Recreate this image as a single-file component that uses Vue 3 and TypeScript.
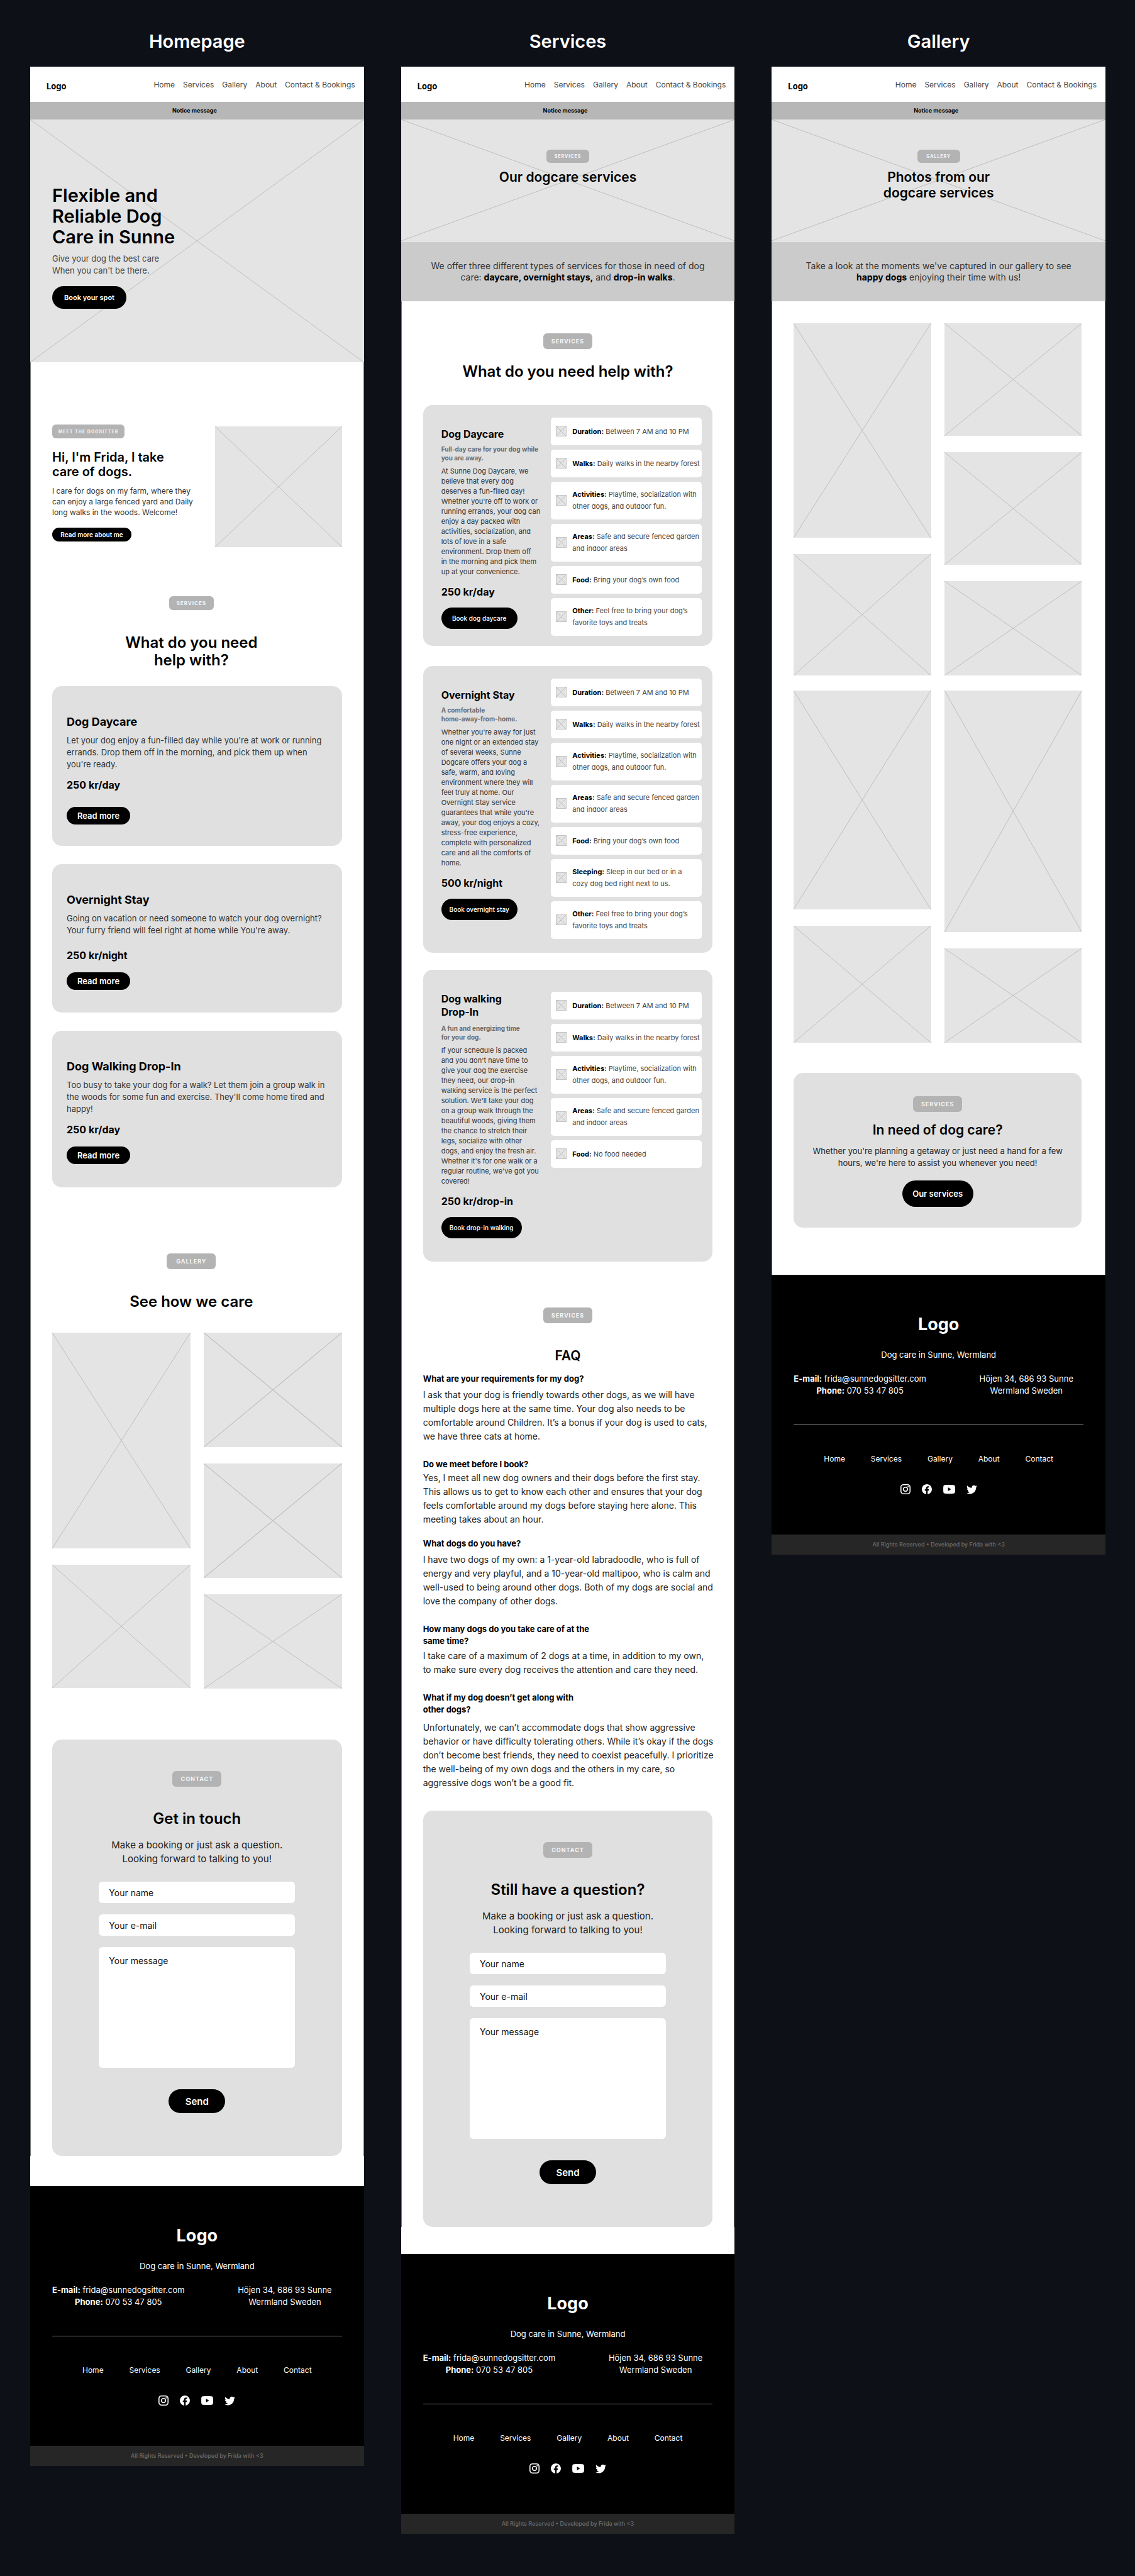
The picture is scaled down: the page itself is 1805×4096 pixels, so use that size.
<script setup lang="ts">
import { h } from 'vue'
import type { VNode } from 'vue'

type PageId = 'home' | 'services' | 'gallery'

interface Part {
  text: string
  strong?: boolean
}

interface Page {
  id: PageId
  title: string
}

interface Teaser {
  name: string
  text: string
  price: string
  kind: string
}

interface Feature {
  label: string
  text: string
}

interface Service {
  kind: string
  name: string
  lead: string
  text: string
  price: string
  action: string
  features: Feature[]
}

interface Faq {
  kind: string
  question: string
  answer: string
}

// Wireframe picture placeholder: a grey box crossed corner to corner.
const CrossBox = () =>
  h('svg', { viewBox: '0 0 100 100', preserveAspectRatio: 'none', 'aria-hidden': 'true' }, [
    h('path', {
      d: 'M0 0L100 100M100 0L0 100',
      fill: 'none',
      stroke: '#bdbdbd',
      'stroke-width': 1,
      'vector-effect': 'non-scaling-stroke',
    }),
  ])

// Copy with its line breaks kept.
const Lines = (props: { text: string }) =>
  props.text
    .split('\n')
    .flatMap((line, index): (VNode | string)[] => (index ? [h('br'), line] : [line]))
Lines.props = ['text']

const pages: Page[] = [
  { id: 'home', title: 'Homepage' },
  { id: 'services', title: 'Services' },
  { id: 'gallery', title: 'Gallery' },
]

const navLinks = ['Home', 'Services', 'Gallery', 'About', 'Contact & Bookings']
const footerLinks = ['Home', 'Services', 'Gallery', 'About', 'Contact']

const intro: Record<'services' | 'gallery', Part[]> = {
  services: [
    { text: 'We offer three different types of services for those in need of dog\ncare: ' },
    { text: 'daycare, overnight stays,', strong: true },
    { text: ' and ' },
    { text: 'drop-in walks', strong: true },
    { text: '.' },
  ],
  gallery: [
    { text: "Take a look at the moments we've captured in our gallery to see\n" },
    { text: 'happy dogs', strong: true },
    { text: ' enjoying their time with us!' },
  ],
}

const teasers: Teaser[] = [
  {
    kind: 'daycare',
    name: 'Dog Daycare',
    text: "Let your dog enjoy a fun-filled day while you're at work or running\nerrands. Drop them off in the morning, and pick them up when\nyou're ready.",
    price: '250 kr/day',
  },
  {
    kind: 'overnight',
    name: 'Overnight Stay',
    text: "Going on vacation or need someone to watch your dog overnight?\nYour furry friend will feel right at home while You're away.",
    price: '250 kr/night',
  },
  {
    kind: 'walking',
    name: 'Dog Walking Drop-In',
    text: "Too busy to take your dog for a walk? Let them join a group walk in\nthe woods for some fun and exercise. They'll come home tired and\nhappy!",
    price: '250 kr/day',
  },
]

const duration: Feature = { label: 'Duration:', text: 'Between 7 AM and 10 PM' }
const walks: Feature = { label: 'Walks:', text: 'Daily walks in the nearby forest' }
const activities: Feature = { label: 'Activities:', text: 'Playtime, socialization with\nother dogs, and outdoor fun.' }
const areas: Feature = { label: 'Areas:', text: 'Safe and secure fenced garden\nand indoor areas' }
const ownFood: Feature = { label: 'Food:', text: 'Bring your dog’s own food' }
const sleeping: Feature = { label: 'Sleeping:', text: 'Sleep in our bed or in a\ncozy dog bed right next to us.' }
const other: Feature = { label: 'Other:', text: 'Feel free to bring your dog’s\nfavorite toys and treats' }

const services: Service[] = [
  {
    kind: 'daycare',
    name: 'Dog Daycare',
    lead: 'Full-day care for your dog while\nyou are away.',
    text: "At Sunne Dog Daycare, we\nbelieve that every dog\ndeserves a fun-filled day!\nWhether you're off to work or\nrunning errands, your dog can\nenjoy a day packed with\nactivities, socialization, and\nlots of love in a safe\nenvironment. Drop them off\nin the morning and pick them\nup at your convenience.",
    price: '250 kr/day',
    action: 'Book dog daycare',
    features: [duration, walks, activities, areas, ownFood, other],
  },
  {
    kind: 'overnight',
    name: 'Overnight Stay',
    lead: 'A comfortable\nhome-away-from-home.',
    text: "Whether you're away for just\none night or an extended stay\nof several weeks, Sunne\nDogcare offers your dog a\nsafe, warm, and loving\nenvironment where they will\nfeel truly at home. Our\nOvernight Stay service\nguarantees that while you're\naway, your dog enjoys a cozy,\nstress-free experience,\ncomplete with personalized\ncare and all the comforts of\nhome.",
    price: '500 kr/night',
    action: 'Book overnight stay',
    features: [duration, walks, activities, areas, ownFood, sleeping, other],
  },
  {
    kind: 'walking',
    name: 'Dog walking\nDrop-In',
    lead: 'A fun and energizing time\nfor your dog.',
    text: "If your schedule is packed\nand you don't have time to\ngive your dog the exercise\nthey need, our drop-in\nwalking service is the perfect\nsolution. We'll take your dog\non a group walk through the\nbeautiful woods, giving them\nthe chance to stretch their\nlegs, socialize with other\ndogs, and enjoy the fresh air.\nWhether it's for one walk or a\nregular routine, we've got you\ncovered!",
    price: '250 kr/drop-in',
    action: 'Book drop-in walking',
    features: [duration, walks, activities, areas, { label: 'Food:', text: 'No food needed' }],
  },
]

const faqs: Faq[] = [
  {
    kind: 'requirements',
    question: 'What are your requirements for my dog?',
    answer:
      'I ask that your dog is friendly towards other dogs, as we will have\nmultiple dogs here at the same time. Your dog also needs to be\ncomfortable around Children. It’s a bonus if your dog is used to cats,\nwe have three cats at home.',
  },
  {
    kind: 'meet',
    question: 'Do we meet before I book?',
    answer:
      'Yes, I meet all new dog owners and their dogs before the first stay.\nThis allows us to get to know each other and ensures that your dog\nfeels comfortable around my dogs before staying here alone. This\nmeeting takes about an hour.',
  },
  {
    kind: 'own',
    question: 'What dogs do you have?',
    answer:
      'I have two dogs of my own: a 1-year-old labradoodle, who is full of\nenergy and very playful, and a 10-year-old maltipoo, who is calm and\nwell-used to being around other dogs. Both of my dogs are social and\nlove the company of other dogs.',
  },
  {
    kind: 'amount',
    question: 'How many dogs do you take care of at the\nsame time?',
    answer:
      'I take care of a maximum of 2 dogs at a time, in addition to my own,\nto make sure every dog receives the attention and care they need.',
  },
  {
    kind: 'conflict',
    question: 'What if my dog doesn’t get along with\nother dogs?',
    answer:
      'Unfortunately, we can’t accommodate dogs that show aggressive\nbehavior or have difficulty tolerating others. While it’s okay if the dogs\ndon’t become best friends, they need to coexist peacefully. I prioritize\nthe well-being of my own dogs and the others in my care, so\naggressive dogs won’t be a good fit.',
  },
]
</script>

<template>
  <main class="board">
    <article v-for="page in pages" :key="page.id" class="column">
      <h1 class="board-title">{{ page.title }}</h1>

      <div class="frame" :class="`frame-${page.id}`">
        <header class="top">
          <a class="top-logo" href="#">Logo</a>
          <nav class="top-nav">
            <a v-for="link in navLinks" :key="link" href="#">{{ link }}</a>
          </nav>
        </header>
        <p class="notice">Notice message</p>

        <template v-if="page.id === 'home'">
          <section class="hero hero-home">
            <CrossBox class="hero-art" />
            <div class="hero-copy">
              <h2>Flexible and<br />Reliable Dog<br />Care in Sunne</h2>
              <p>Give your dog the best care<br />When you can't be there.</p>
              <button type="button" class="pill pill-hero">Book your spot</button>
            </div>
          </section>

          <div class="body">
            <section class="about">
              <div class="about-copy">
                <span class="badge badge-meet">MEET THE DOGSITTER</span>
                <h2>Hi, I'm Frida, I take<br />care of dogs.</h2>
                <p>I care for dogs on my farm, where they<br />can enjoy a large fenced yard and Daily<br />long walks in the woods. Welcome!</p>
                <button type="button" class="pill pill-about">Read more about me</button>
              </div>
              <CrossBox class="picture about-picture" />
            </section>

            <section class="teasers">
              <div class="heading heading-left">
                <span class="badge badge-medium">SERVICES</span>
                <h2>What do you need<br />help with?</h2>
              </div>
              <article v-for="item in teasers" :key="item.kind" class="teaser" :class="`teaser-${item.kind}`">
                <h3>{{ item.name }}</h3>
                <p><Lines :text="item.text" /></p>
                <strong class="price">{{ item.price }}</strong>
                <button type="button" class="pill pill-more">Read more</button>
              </article>
            </section>

            <section class="preview">
              <div class="heading heading-left">
                <span class="badge badge-large">GALLERY</span>
                <h2>See how we care</h2>
              </div>
              <div class="photos">
                <div class="photo-column">
                  <CrossBox class="picture h343" />
                  <CrossBox class="picture h196" />
                </div>
                <div class="photo-column">
                  <CrossBox class="picture h182" />
                  <CrossBox class="picture h182" />
                  <CrossBox class="picture h150" />
                </div>
              </div>
            </section>
          </div>
        </template>

        <template v-else-if="page.id === 'services'">
          <section class="hero hero-sub">
            <CrossBox class="hero-art" />
            <span class="badge badge-small">SERVICES</span>
            <h2>Our dogcare services</h2>
          </section>
          <p class="intro">
            <component :is="part.strong ? 'strong' : 'span'" v-for="part in intro.services" :key="part.text"><Lines :text="part.text" /></component>
          </p>

          <div class="body">
            <div class="heading heading-services">
              <span class="badge badge-large">SERVICES</span>
              <h2>What do you need help with?</h2>
            </div>

            <article v-for="item in services" :key="item.kind" class="service" :class="`service-${item.kind}`">
              <div class="service-copy">
                <h3><Lines :text="item.name" /></h3>
                <p class="service-lead"><Lines :text="item.lead" /></p>
                <p class="service-text"><Lines :text="item.text" /></p>
                <strong class="price">{{ item.price }}</strong>
                <button type="button" class="pill pill-book">{{ item.action }}</button>
              </div>
              <ul class="features">
                <li v-for="feature in item.features" :key="feature.label">
                  <CrossBox class="feature-icon" />
                  <p><strong>{{ feature.label }}</strong>&#32;<Lines :text="feature.text" /></p>
                </li>
              </ul>
            </article>

            <section class="faq">
              <div class="heading heading-faq">
                <span class="badge badge-large">SERVICES</span>
                <h2>FAQ</h2>
              </div>
              <div v-for="item in faqs" :key="item.kind" class="faq-item" :class="`faq-${item.kind}`">
                <h3><Lines :text="item.question" /></h3>
                <p><Lines :text="item.answer" /></p>
              </div>
            </section>
          </div>
        </template>

        <template v-else>
          <section class="hero hero-sub">
            <CrossBox class="hero-art" />
            <span class="badge badge-small">GALLERY</span>
            <h2>Photos from our<br />dogcare services</h2>
          </section>
          <p class="intro">
            <component :is="part.strong ? 'strong' : 'span'" v-for="part in intro.gallery" :key="part.text"><Lines :text="part.text" /></component>
          </p>

          <div class="body body-gallery">
            <div class="photos">
              <div class="photo-column">
                <CrossBox class="picture h341" />
                <CrossBox class="picture h193" />
              </div>
              <div class="photo-column">
                <CrossBox class="picture h179" />
                <CrossBox class="picture h179" />
                <CrossBox class="picture h150" />
              </div>
            </div>
            <div class="photos">
              <div class="photo-column">
                <CrossBox class="picture h348" />
                <CrossBox class="picture h186" />
              </div>
              <div class="photo-column">
                <CrossBox class="picture h384" />
                <CrossBox class="picture h150" />
              </div>
            </div>
            <section class="cta">
              <span class="badge badge-large">SERVICES</span>
              <h2>In need of dog care?</h2>
              <p>Whether you're planning a getaway or just need a hand for a few<br />hours, we're here to assist you whenever you need!</p>
              <button type="button" class="pill pill-cta">Our services</button>
            </section>
          </div>
        </template>

        <div v-if="page.id !== 'gallery'" class="body">
          <form class="contact" @submit.prevent>
            <span class="badge badge-large">CONTACT</span>
            <h2>{{ page.id === 'home' ? 'Get in touch' : 'Still have a question?' }}</h2>
            <p>Make a booking or just ask a question.<br />Looking forward to talking to you!</p>
            <input type="text" placeholder="Your name" aria-label="Your name" />
            <input type="email" placeholder="Your e-mail" aria-label="Your e-mail" />
            <textarea placeholder="Your message" aria-label="Your message"></textarea>
            <button type="submit" class="pill pill-send">Send</button>
          </form>
        </div>

        <footer class="footer">
          <div class="footer-logo">Logo</div>
          <p class="tagline">Dog care in Sunne, Wermland</p>
          <div class="footer-info">
            <p><strong>E-mail:</strong> frida@sunnedogsitter.com<br /><strong>Phone:</strong> 070 53 47 805</p>
            <p class="address">Höjen 34, 686 93 Sunne<br />Wermland Sweden</p>
          </div>
          <hr />
          <nav class="footer-nav">
            <a v-for="link in footerLinks" :key="link" href="#">{{ link }}</a>
          </nav>
          <div class="social">
            <a href="#" aria-label="Instagram">
              <svg width="16" height="16" viewBox="2 2 20 20" fill="currentColor">
                <path d="M7.8,2H16.2C19.4,2 22,4.6 22,7.8V16.2A5.8,5.8 0 0,1 16.2,22H7.8C4.6,22 2,19.4 2,16.2V7.8A5.8,5.8 0 0,1 7.8,2M7.6,4A3.6,3.6 0 0,0 4,7.6V16.4C4,18.39 5.61,20 7.6,20H16.4A3.6,3.6 0 0,0 20,16.4V7.6C20,5.61 18.39,4 16.4,4H7.6M17.25,5.5A1.25,1.25 0 0,1 18.5,6.75A1.25,1.25 0 0,1 17.25,8A1.25,1.25 0 0,1 16,6.75A1.25,1.25 0 0,1 17.25,5.5M12,7A5,5 0 0,1 17,12A5,5 0 0,1 12,17A5,5 0 0,1 7,12A5,5 0 0,1 12,7M12,9A3,3 0 0,0 9,12A3,3 0 0,0 12,15A3,3 0 0,0 15,12A3,3 0 0,0 12,9Z" />
              </svg>
            </a>
            <a href="#" aria-label="Facebook">
              <svg width="16" height="16" viewBox="2 2 20 20" fill="currentColor">
                <path d="M12 2.04C6.5 2.04 2 6.53 2 12.06C2 17.06 5.66 21.21 10.44 21.96V14.96H7.9V12.06H10.44V9.85C10.44 7.34 11.93 5.96 14.22 5.96C15.31 5.96 16.45 6.15 16.45 6.15V8.62H15.19C13.95 8.62 13.56 9.39 13.56 10.16V12.06H16.34L15.89 14.96H13.56V21.96A10 10 0 0 0 22 12.06C22 6.53 17.5 2.04 12 2.04Z" />
              </svg>
            </a>
            <a href="#" aria-label="YouTube">
              <svg width="19" height="14" viewBox="0 0 20 14.7" fill="currentColor" fill-rule="evenodd">
                <path d="M3 .3C7 0 13 0 17 .3C19 .5 19.6 1.5 19.8 3.2C20 6 20 9 19.8 11.500C19.600 13.200 19 14.200 17 14.400C13 14.700 7 14.700 3 14.400C1 14.200 .4 13.200 .2 11.500C0 9 0 6 .2 3.200C.4 1.500 1 .5 3 .3ZM8 4.300V10.400L13.200 7.350Z" />
              </svg>
            </a>
            <a href="#" aria-label="Twitter">
              <svg width="17" height="15" viewBox="1.500 3.700 21 17.500" fill="currentColor">
                <path d="M22.46,6C21.69,6.35 20.86,6.58 20,6.69C20.88,6.16 21.56,5.32 21.88,4.31C21.05,4.81 20.13,5.16 19.16,5.36C18.37,4.5 17.26,4 16,4C13.65,4 11.73,5.92 11.73,8.29C11.73,8.63 11.77,8.96 11.84,9.27C8.28,9.09 5.11,7.38 3,4.79C2.63,5.42 2.42,6.16 2.42,6.94C2.42,8.43 3.17,9.75 4.33,10.5C3.62,10.5 2.96,10.3 2.38,10C2.38,10 2.38,10 2.38,10.03C2.38,12.11 3.86,13.85 5.82,14.24C5.46,14.34 5.08,14.39 4.69,14.39C4.42,14.39 4.15,14.36 3.89,14.31C4.43,16 6,17.26 7.89,17.29C6.43,18.45 4.58,19.13 2.56,19.13C2.22,19.13 1.88,19.11 1.54,19.07C3.44,20.29 5.7,21 8.12,21C16,21 20.33,14.46 20.33,8.79C20.33,8.6 20.33,8.42 20.32,8.23C21.16,7.63 21.88,6.87 22.46,6Z" />
              </svg>
            </a>
          </div>
        </footer>
        <p class="legal">All Rights Reserved • Developed by Frida with &lt;3</p>
      </div>
    </article>
  </main>
</template>

<style>
body {
  margin: 0;
  background: #0d1017;
}
</style>

<style scoped>
.board {
  display: grid;
  grid-template-columns: repeat(3, minmax(0, 1fr));
  align-items: start;
  gap: 59px;
  padding: 49px 47px 65px 48px;
  background: #0d1017;
  color: #000;
  font-family: Inter, 'Liberation Sans', sans-serif;
}

h1,
h2,
h3,
p,
ul {
  margin: 0;
}

a {
  color: inherit;
  text-decoration: none;
}

.board-title {
  margin-bottom: 23px;
  color: #fff;
  font-size: 29px;
  font-weight: 600;
  line-height: 34px;
  text-align: center;
}

.frame {
  background: #fff;
}

.top {
  display: flex;
  align-items: center;
  justify-content: space-between;
  height: 56px;
  padding: 0 14px 0 26px;
}

.top-logo {
  padding-top: 5px;
  font-size: 13px;
  font-weight: 700;
}

.top-nav {
  display: flex;
  gap: 13px;
  color: #444;
  font-size: 12px;
}

.notice {
  padding-right: 8px;
  background: #b7b7b7;
  font-size: 9px;
  font-weight: 700;
  line-height: 28px;
  text-align: center;
}

.hero {
  position: relative;
  background: #e4e4e4;
}

.hero-art {
  position: absolute;
  inset: 0;
  width: 100%;
  height: 100%;
}

.hero-home {
  padding: 104px 35px 85px;
}

.hero-copy {
  position: relative;
}

.hero-copy h2 {
  font-size: 29px;
  font-weight: 600;
  line-height: 33px;
}

.hero-copy p {
  margin-top: 9px;
  color: #444;
  font-size: 13px;
  line-height: 19px;
}

.hero-sub {
  display: flex;
  flex-direction: column;
  align-items: center;
  gap: 10px;
  box-sizing: border-box;
  min-height: 193px;
  padding-top: 48px;
}

.hero-sub .badge,
.hero-sub h2 {
  position: relative;
}

.hero-sub h2 {
  font-size: 21px;
  font-weight: 600;
  line-height: 25px;
  text-align: center;
}

.intro {
  padding: 30px 0 29px;
  border-top: 1px solid #fff;
  background: #cbcbcb;
  font-size: 14px;
  line-height: 18px;
  text-align: center;
}

.intro span {
  color: #333;
}

.pill {
  display: block;
  padding: 0;
  border: 0;
  border-radius: 24px;
  background: #000;
  color: #fff;
  font-family: inherit;
  font-weight: 600;
}

.pill-hero {
  width: 118px;
  height: 36px;
  margin-top: 15px;
  font-size: 11px;
}

.pill-about {
  width: 126px;
  height: 22px;
  margin-top: 16px;
  font-size: 10px;
}

.pill-more {
  width: 101px;
  height: 28px;
  margin-top: 17px;
  font-size: 13px;
}

.pill-book {
  width: 121px;
  height: 34px;
  margin-top: 15px;
  font-size: 10px;
  font-weight: 500;
}

.pill-send {
  width: 90px;
  height: 38px;
  margin-top: 34px;
  font-size: 15px;
}

.pill-cta {
  width: 113px;
  height: 42px;
  margin-top: 18px;
  font-size: 13px;
}

.badge {
  display: flex;
  align-items: center;
  justify-content: center;
  border-radius: 6px;
  background: #b3b3b3;
  color: #f6f6f6;
  font-weight: 700;
  letter-spacing: 1px;
}

.badge-meet {
  width: 115px;
  height: 22px;
  font-size: 7px;
}

.badge-small {
  width: 68px;
  height: 21px;
  font-size: 7px;
}

.badge-medium {
  width: 71px;
  height: 22px;
  font-size: 8px;
}

.badge-large {
  width: 78px;
  height: 25px;
  font-size: 9px;
}

.body {
  padding: 0 34px;
  border: solid #777;
  border-width: 0 1px;
}

.picture {
  display: block;
  width: 100%;
  background: #e4e4e4;
}

.about {
  display: flex;
  justify-content: space-between;
  padding-top: 99px;
}

.about h2 {
  margin-top: 19px;
  font-size: 20px;
  font-weight: 600;
  line-height: 23px;
}

.about p {
  margin-top: 10px;
  color: #333;
  font-size: 12px;
  line-height: 17px;
}

.about-picture {
  width: 202px;
  height: 192px;
  margin-top: 3px;
}

.heading {
  display: flex;
  flex-direction: column;
  align-items: center;
  gap: 38px;
  text-align: center;
}

.heading h2,
.contact h2 {
  font-size: 24px;
  font-weight: 600;
  line-height: 28px;
}

.heading-left {
  padding-right: 18px;
}

.teasers .heading {
  padding-top: 78px;
  padding-bottom: 27px;
}

.teaser {
  margin-bottom: 29px;
  padding: 45px 23px 34px;
  border-radius: 15px;
  background: #e0e0e0;
}

.teaser h3 {
  font-size: 18px;
  font-weight: 700;
  line-height: 24px;
}

.teaser p {
  margin-top: 8px;
  color: #333;
  font-size: 13px;
  line-height: 19px;
}

.price {
  display: block;
  margin-top: 13px;
  font-size: 16px;
  font-weight: 700;
  line-height: 20px;
}

.teaser-daycare .pill {
  margin-top: 25px;
}

.teaser-overnight {
  padding-bottom: 36px;
}

.teaser-overnight .price {
  margin-top: 20px;
}

.teaser-walking {
  margin-bottom: 0;
  padding-bottom: 37px;
}

.preview .heading {
  padding-top: 105px;
  padding-bottom: 35px;
}

.preview {
  padding-bottom: 81px;
}

.photos {
  display: grid;
  grid-template-columns: 1fr 1fr;
  gap: 21px;
}

.photo-column {
  display: flex;
  flex-direction: column;
  gap: 26px;
}

.h343 {
  height: 343px;
}

.h196 {
  height: 196px;
}

.h182 {
  height: 182px;
}

.h150 {
  height: 150px;
}

.h341 {
  height: 341px;
}

.h193 {
  height: 193px;
}

.h179 {
  height: 179px;
}

.h348 {
  height: 348px;
}

.h186 {
  height: 186px;
}

.h384 {
  height: 384px;
}

.heading-services {
  gap: 22px;
  padding: 51px 0 39px;
}

.service {
  display: grid;
  grid-template-columns: 1fr 240px;
  gap: 15px;
  margin-bottom: 32px;
  padding: 20px 17px 16px 29px;
  border-radius: 15px;
  background: #e0e0e0;
}

.service-copy {
  padding-top: 16px;
  white-space: nowrap;
}

.service h3 {
  font-size: 16px;
  font-weight: 700;
  line-height: 21px;
}

.service-lead {
  margin-top: 6px;
  color: #6b6b6b;
  font-size: 10px;
  font-weight: 700;
  line-height: 14px;
}

.service-text {
  margin-top: 6px;
  color: #333;
  font-size: 11px;
  line-height: 16px;
}

.service .price {
  margin-top: 14px;
}

.service-overnight {
  margin-bottom: 27px;
  padding-bottom: 22px;
}

.service-walking {
  margin-bottom: 0;
  padding-bottom: 37px;
}

.service-walking .service-lead {
  margin-top: 8px;
}

.service-walking .features {
  padding-top: 15px;
}

.service-walking .pill {
  width: 128px;
}

.features {
  display: flex;
  flex-direction: column;
  gap: 7px;
  padding: 0;
  list-style: none;
}

.features li {
  display: flex;
  align-items: center;
  gap: 9px;
  padding: 11px 0 11px 8px;
  border-radius: 5px;
  background: #fff;
}

.features p {
  color: #444;
  font-size: 11px;
  line-height: 19px;
  white-space: nowrap;
}

.features strong {
  color: #000;
}

.feature-icon {
  box-sizing: border-box;
  flex: none;
  width: 17px;
  height: 17px;
  margin: 2px 0 3px;
  border: 1px solid #c4c4c4;
  background: #e4e4e4;
}

.heading-faq {
  padding-top: 73px;
}

.heading-faq h2 {
  font-size: 21px;
}

.faq-item {
  margin-top: 24px;
}

.faq-item h3 {
  font-size: 13px;
  font-weight: 700;
  line-height: 19px;
}

.faq-item p {
  margin-top: 5px;
  color: #222;
  font-size: 14px;
  line-height: 22px;
  white-space: nowrap;
}

.faq-requirements {
  margin-top: 13px;
}

.faq-meet p {
  margin-top: 1px;
}

.faq-own {
  margin-top: 18px;
}

.faq-amount p {
  margin-top: 3px;
}

.faq-conflict p {
  margin-top: 8px;
}

.faq {
  padding-bottom: 33px;
}

.contact {
  display: flex;
  flex-direction: column;
  align-items: center;
  margin-bottom: 48px;
  padding: 50px 0 68px;
  border-radius: 15px;
  background: #e0e0e0;
}

.frame-services .contact {
  margin-bottom: 43px;
}

.contact h2 {
  margin-top: 37px;
}

.contact p {
  margin: 17px 0 7px;
  color: #222;
  font-size: 15px;
  line-height: 22px;
  text-align: center;
}

.contact input,
.contact textarea {
  box-sizing: border-box;
  width: 312px;
  margin: 18px 0 0;
  padding: 0 16px;
  border: 0;
  border-radius: 6px;
  background: #fff;
  font-family: inherit;
  font-size: 14px;
}

.contact input {
  height: 34px;
}

.contact textarea {
  height: 192px;
  padding-top: 13px;
  resize: none;
}

.contact ::placeholder {
  color: #111;
  opacity: 1;
}

.body-gallery {
  display: flex;
  flex-direction: column;
  gap: 24px;
  padding: 35px 37px 75px 34px;
}

.cta {
  display: flex;
  flex-direction: column;
  align-items: center;
  margin-top: 24px;
  padding: 37px 0 33px;
  border-radius: 15px;
  background: #e0e0e0;
  text-align: center;
}

.cta h2 {
  margin-top: 15px;
  font-size: 21px;
  font-weight: 600;
  line-height: 28px;
}

.cta p {
  margin-top: 10px;
  color: #222;
  font-size: 13px;
  line-height: 19px;
}

.footer {
  padding: 63px 35px 64px;
  background: #000;
  color: #fff;
  text-align: center;
}

.footer-logo {
  font-size: 27px;
  font-weight: 700;
  line-height: 32px;
}

.tagline {
  margin-top: 23px;
  font-size: 13px;
  line-height: 19px;
}

.footer-info {
  display: flex;
  justify-content: space-between;
  margin-top: 19px;
  font-size: 13px;
  line-height: 19px;
}

.address {
  padding-right: 16px;
}

.footer hr {
  height: 1px;
  margin: 44px 0;
  border: 0;
  background: #777;
}

.footer-nav {
  display: flex;
  justify-content: space-between;
  padding: 0 48px;
  font-size: 12px;
  line-height: 19px;
}

.social {
  display: flex;
  align-items: center;
  justify-content: center;
  gap: 18px;
  margin-top: 31px;
}

.social svg {
  display: block;
}

.legal {
  background: #262626;
  color: #6e6e6e;
  font-size: 9px;
  font-weight: 500;
  line-height: 32px;
  text-align: center;
}
</style>
